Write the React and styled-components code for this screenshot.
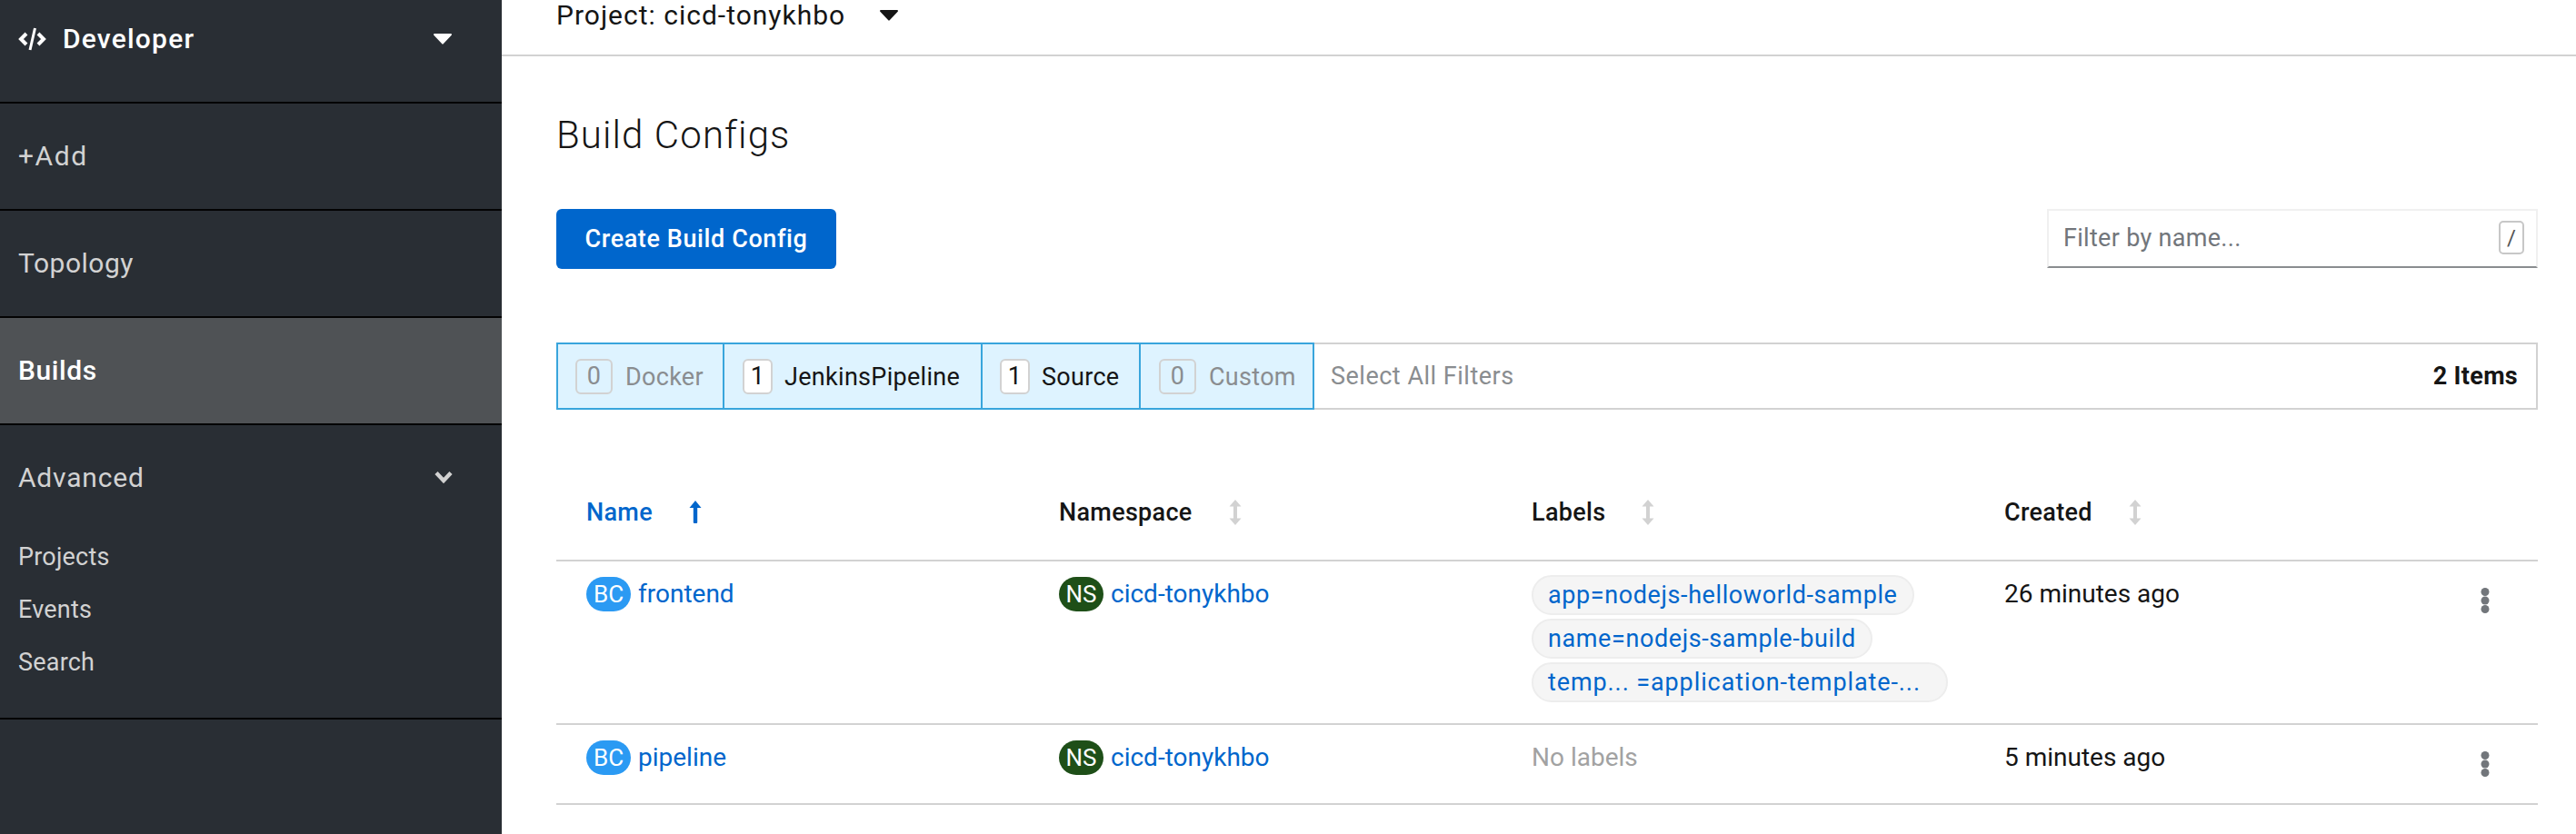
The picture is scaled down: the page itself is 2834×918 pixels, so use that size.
import styled, { createGlobalStyle } from 'styled-components';

const GlobalStyle = createGlobalStyle`
  html, body {
    margin: 0;
    padding: 0;
    background: #fff;
  }
  * {
    box-sizing: border-box;
  }
  body {
    font-family: Roboto, "Liberation Sans", sans-serif;
    font-size: 28px;
    color: #151515;
  }
`;

const Page = styled.div`
  display: flex;
  width: 2834px;
  height: 918px;
  overflow: hidden;
`;

const Sidebar = styled.nav`
  width: 552px;
  flex: none;
  background: #292e34;
  color: #d2d2d2;
`;

const Perspective = styled.div`
  height: 114px;
  border-bottom: 2px solid #030303;
  display: flex;
  justify-content: space-between;
  align-items: center;
  padding: 0 55px 26px 20px;
  color: #fff;
  font-size: 30px;
  font-weight: 500;
  letter-spacing: 1.2px;
  line-height: 30px;
`;

const PerspectiveName = styled.div`
  display: flex;
  gap: 18px;
  align-items: center;
  height: 30px;
`;

const NavItem = styled.div`
  height: 118px;
  border-bottom: 2px solid #030303;
  display: flex;
  align-items: center;
  padding: 0 20px 2px;
  font-size: 30px;
  letter-spacing: ${(p) => p.$spacing || 0.5}px;
  background: ${(p) => (p.$active ? '#4f5255' : 'transparent')};
  color: ${(p) => (p.$active ? '#fff' : '#d2d2d2')};
  font-weight: ${(p) => (p.$active ? 500 : 400)};
`;

const NavGroup = styled.div`
  height: 324px;
  border-bottom: 2px solid #030303;
  padding: 41px 54px 0 20px;
`;

const NavGroupHead = styled.div`
  display: flex;
  justify-content: space-between;
  align-items: center;
  height: 32px;
  font-size: 30px;
  letter-spacing: 0.8px;
  margin-bottom: 43px;
`;

const SubItem = styled.div`
  height: 58px;
  display: flex;
  align-items: center;
  font-size: 27px;
  letter-spacing: 0.2px;
`;

const Main = styled.main`
  flex: 1;
  min-width: 0;
`;

const TopBar = styled.div`
  height: 62px;
  border-bottom: 2px solid #d2d2d2;
  display: flex;
  align-items: center;
  gap: 38px;
  padding: 0 0 26px 60px;
  font-size: 30px;
  letter-spacing: 1px;
  line-height: 34px;
`;

const Content = styled.div`
  padding: 0 42px 0 60px;
`;

const Title = styled.h1`
  margin: 62px 0 0;
  height: 50px;
  font-size: 42px;
  line-height: 50px;
  font-weight: 300;
  letter-spacing: 1.1px;
`;

const ActionRow = styled.div`
  margin-top: 56px;
  display: flex;
  justify-content: space-between;
  align-items: flex-start;
`;

const PrimaryButton = styled.button`
  width: 308px;
  height: 66px;
  background: #06c;
  color: #fff;
  border: none;
  border-radius: 6px;
  font: 500 27px Roboto, sans-serif;
  letter-spacing: 0.6px;
  padding: 0;
`;

const SearchBox = styled.div`
  width: 540px;
  height: 65px;
  border: 2px solid #f0f0f0;
  border-bottom-color: #8a8d90;
  display: flex;
  align-items: center;
  justify-content: space-between;
  padding: 0 13px 2px 16px;
  color: #72767b;
  font-size: 27px;
  letter-spacing: 0.3px;
`;

const Kbd = styled.span`
  width: 28px;
  height: 37px;
  border: 2px solid #c7c7c7;
  border-radius: 5px;
  display: flex;
  align-items: center;
  justify-content: center;
  font-size: 24px;
  color: #555;
`;

const FilterBar = styled.div`
  margin-top: 81px;
  height: 74px;
  display: flex;
  align-items: stretch;
  border: 2px solid #d2d2d2;
  border-left: none;
  font-size: 27px;
  letter-spacing: 0.3px;
`;

const FilterGroup = styled.div`
  display: flex;
  border: 2px solid #39a5dc;
  margin: -2px 0;
`;

const FilterButton = styled.div`
  width: ${(p) => p.$width}px;
  background: #def3ff;
  display: flex;
  align-items: center;
  gap: ${(p) => (p.$dim ? 14 : 13)}px;
  padding: 2px 0 0 ${(p) => p.$pad}px;
  color: ${(p) => (p.$dim ? '#8a8d90' : '#151515')};
  & + & {
    border-left: 2px solid #39a5dc;
  }
`;

const CountBox = styled.span`
  width: ${(p) => (p.$dim ? 41 : 33)}px;
  height: 39px;
  margin-top: -2px;
  border: 2px solid #d2d2d2;
  border-radius: 6px;
  background: ${(p) => (p.$dim ? 'transparent' : '#fff')};
  display: flex;
  align-items: center;
  justify-content: center;
`;

const SelectAll = styled.span`
  align-self: center;
  margin-left: 18px;
  color: #8a8d90;
  letter-spacing: 0.5px;
`;

const ItemCount = styled.span`
  align-self: center;
  margin-left: auto;
  margin-right: 20px;
  font-weight: 700;
`;

const Row = styled.div`
  display: grid;
  grid-template-columns: 520px 520px 520px 1fr 90px;
  border-bottom: 2px solid #d2d2d2;
  height: ${(p) => p.$height}px;
`;

const HeadRow = styled(Row)`
  align-items: center;
  padding-top: 60px;
`;

const HeadCell = styled.div`
  padding-left: 33px;
  display: flex;
  align-items: center;
  gap: 40px;
  font-size: 27px;
  font-weight: 500;
  letter-spacing: 0.3px;
  color: ${(p) => (p.$sorted ? '#06c' : '#151515')};
`;

const Cell = styled.div`
  padding: 17px 0 0 33px;
  display: flex;
  flex-direction: ${(p) => (p.$stack ? 'column' : 'row')};
  align-items: flex-start;
  gap: ${(p) => (p.$stack ? '4px' : '8px')};
  color: ${(p) => (p.$muted ? '#a2a2a2' : 'inherit')};
  line-height: 38px;
`;

const Badge = styled.span`
  width: 49px;
  height: 38px;
  border-radius: 19px;
  background: ${(p) => p.$bg};
  color: #fff;
  display: flex;
  align-items: center;
  justify-content: center;
  font-size: 26px;
  flex: none;
`;

const ResourceLink = styled.span`
  color: #06c;
`;

const Chip = styled.span`
  height: 44px;
  border: 2px solid #ededed;
  border-radius: 22px;
  background: #f5f5f5;
  color: #06c;
  display: flex;
  align-items: center;
  padding: 0 ${(p) => p.$right || 16}px 0 16px;
  white-space: nowrap;
  font-size: 27px;
  letter-spacing: ${(p) => p.$spacing || 0.6}px;
  margin-top: ${(p) => (p.$first ? '-2px' : '0')};
`;

const KebabCell = styled.div`
  padding: 29px 0 0 27px;
  color: #72767b;
`;

const CodeIcon = () => (
  <svg width="31" height="26" viewBox="0 0 31 26" fill="none" stroke="#fff" strokeWidth="4">
    <path d="M9 7 3 13l6 6M22 7l6 6-6 6" />
    <path d="M18.5 1 13 25" strokeWidth="3" />
  </svg>
);

const Caret = ({ color = '#fff' }) => (
  <svg width="20" height="12" viewBox="0 0 20 12" fill={color}>
    <path d="M1 0h18a1 1 0 0 1 .7 1.700l-9 9.600a1 1 0 0 1-1.400 0l-9-9.600A1 1 0 0 1 1 0z" />
  </svg>
);

const Chevron = () => (
  <svg width="20" height="14" viewBox="0 0 20 14" fill="none" stroke="#d2d2d2" strokeWidth="4.4">
    <path d="M2 2.500l8 8.500 8-8.500" />
  </svg>
);

const SortNone = () => (
  <svg width="14" height="28" viewBox="0 0 14 28" fill="#d2d2d2">
    <path d="M7 0l6.500 7.500H9v13h4.500L7 28 .5 20.500H5v-13H.5z" />
  </svg>
);

const SortUp = () => (
  <svg width="14" height="25" viewBox="0 0 14 25" fill="#06c">
    <path d="M7 0l6.500 8H9.200v16a1 1 0 0 1-1 1H5.800a1 1 0 0 1-1-1V8H.5z" />
  </svg>
);

const Kebab = () => (
  <svg width="10" height="28" viewBox="0 0 10 28" fill="#72767b">
    <circle cx="5" cy="4.500" r="4.500" />
    <circle cx="5" cy="14" r="4.500" />
    <circle cx="5" cy="23.500" r="4.500" />
  </svg>
);

const App = () => {
  return (
    <Page>
      <GlobalStyle />
      <Sidebar>
        <Perspective>
          <PerspectiveName>
            <CodeIcon />
            Developer
          </PerspectiveName>
          <Caret />
        </Perspective>
        <NavItem $spacing={1.6}>+Add</NavItem>
        <NavItem>Topology</NavItem>
        <NavItem $active $spacing={0.6}>
          Builds
        </NavItem>
        <NavGroup>
          <NavGroupHead>
            Advanced
            <Chevron />
          </NavGroupHead>
          <SubItem>Projects</SubItem>
          <SubItem>Events</SubItem>
          <SubItem>Search</SubItem>
        </NavGroup>
      </Sidebar>
      <Main>
        <TopBar>
          Project: cicd-tonykhbo
          <Caret color="#151515" />
        </TopBar>
        <Content>
          <Title>Build Configs</Title>
          <ActionRow>
            <PrimaryButton>Create Build Config</PrimaryButton>
            <SearchBox>
              Filter by name...
              <Kbd>/</Kbd>
            </SearchBox>
          </ActionRow>
          <FilterBar>
            <FilterGroup>
              <FilterButton $width={181} $pad={19} $dim>
                <CountBox $dim>0</CountBox>
                Docker
              </FilterButton>
              <FilterButton $width={284} $pad={20}>
                <CountBox>1</CountBox>
                JenkinsPipeline
              </FilterButton>
              <FilterButton $width={174} $pad={19}>
                <CountBox>1</CountBox>
                Source
              </FilterButton>
              <FilterButton $width={191} $pad={20} $dim>
                <CountBox $dim>0</CountBox>
                Custom
              </FilterButton>
            </FilterGroup>
            <SelectAll>Select All Filters</SelectAll>
            <ItemCount>2 Items</ItemCount>
          </FilterBar>
          <HeadRow $height={167}>
            <HeadCell $sorted>
              Name
              <SortUp />
            </HeadCell>
            <HeadCell>
              Namespace
              <SortNone />
            </HeadCell>
            <HeadCell>
              Labels
              <SortNone />
            </HeadCell>
            <HeadCell>
              Created
              <SortNone />
            </HeadCell>
          </HeadRow>
          <Row $height={180}>
            <Cell>
              <Badge $bg="#2b9af3">BC</Badge>
              <ResourceLink>frontend</ResourceLink>
            </Cell>
            <Cell>
              <Badge $bg="#1e4f18">NS</Badge>
              <ResourceLink>cicd-tonykhbo</ResourceLink>
            </Cell>
            <Cell $stack>
              <Chip $first>app=nodejs-helloworld-sample</Chip>
              <Chip>name=nodejs-sample-build</Chip>
              <Chip $right={28} $spacing={0.9}>
                temp... =application-template-...
              </Chip>
            </Cell>
            <Cell>26 minutes ago</Cell>
            <KebabCell>
              <Kebab />
            </KebabCell>
          </Row>
          <Row $height={88}>
            <Cell>
              <Badge $bg="#2b9af3">BC</Badge>
              <ResourceLink>pipeline</ResourceLink>
            </Cell>
            <Cell>
              <Badge $bg="#1e4f18">NS</Badge>
              <ResourceLink>cicd-tonykhbo</ResourceLink>
            </Cell>
            <Cell $muted>No labels</Cell>
            <Cell>5 minutes ago</Cell>
            <KebabCell>
              <Kebab />
            </KebabCell>
          </Row>
        </Content>
      </Main>
    </Page>
  );
};

export default App;
